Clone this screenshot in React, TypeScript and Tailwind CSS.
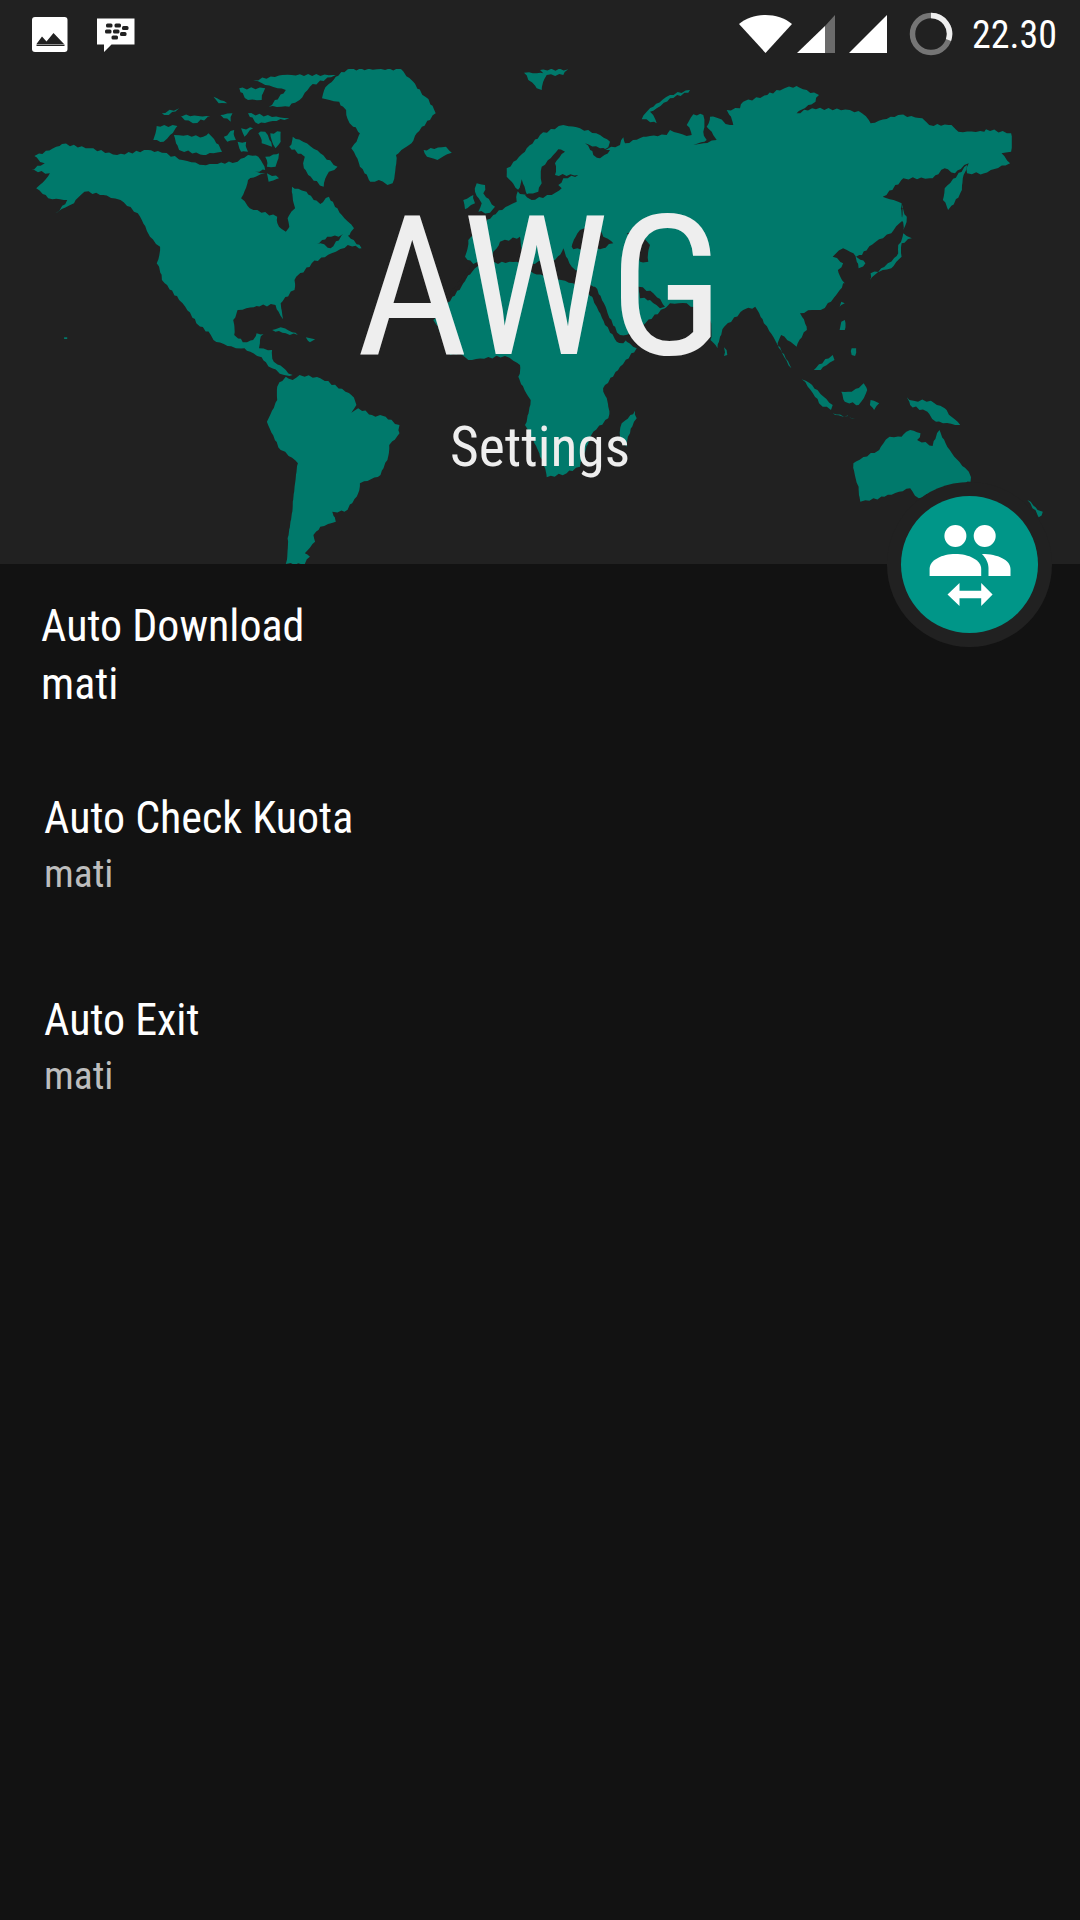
const font = { fontFamily: "Roboto, sans-serif", fontStretch: "75%" };

// each land mass is a list of [originX, originY, points] traced off the zoomed crops
type Chunk = [number, number, string];

// the crops at x=440 came back at 3x, the wider ones at 1568/540
function toPoints(chunks: Chunk[], rough = false) {
  const out: [number, number][] = [];
  chunks.forEach(([ox, oy, s]) => {
    const sx = ox === 440 ? 3 : 1568 / 540;
    s.split(" ").forEach((p) => {
      const [x, y] = p.split(",").map(Number);
      out.push([ox + x / sx, oy + y / 3]);
    });
  });
  if (!rough) return out.map((p) => p.join(",")).join(" ");
  // break long edges up so the coast looks nibbled like the bitmap map
  const res: string[] = [];
  out.forEach(([x, y], i) => {
    const [nx, ny] = out[(i + 1) % out.length];
    const n = Math.max(1, Math.round(Math.hypot(nx - x, ny - y) / 4));
    for (let k = 0; k < n; k++) {
      const t = k / n;
      const j = k === 0 ? 0 : Math.sin(x * 12.9 + y * 78.2 + k * 37.7) * 1.1;
      const l = Math.cos(x * 39.3 + y * 11.1 + k * 53.1) * 1.1;
      res.push(`${(x + (nx - x) * t + j).toFixed(1)},${(y + (ny - y) * t + (k === 0 ? 0 : l)).toFixed(1)}`);
    }
  });
  return res.join(" ");
}

const LAND: Chunk[][] = [
  // north america
  [[0, 0, "100,468 180,432 260,445 340,465 430,450 470,458 530,480 590,495 690,485 720,465 750,470 770,510 740,515 770,520 720,540 700,595 725,625 805,650 810,680 830,695 840,680 835,655 857,625 848,560 890,575 930,612 955,590 1000,655 1028,685 1015,705 950,710 905,740 930,730 960,745 1000,700 1050,745 1010,735 975,755 905,790 860,830 855,840"],
   [0, 280, "855,30 815,70 822,118 800,75 745,78 690,90 677,120 680,165 705,187 735,180 745,160 765,162 755,180 752,205 790,210 795,245 830,270 850,285 825,285 790,265 760,232 710,205 685,205 620,180 612,165 570,130 520,60 470,0"],
   [0, 0, "455,790 465,740 430,700 400,640 350,600 300,585 245,575 215,610 160,640 195,600 140,595 105,565 145,520 92,510 130,490"]],
  // greenland, iceland
  [[0, 0, "975,230 1010,208 1165,208 1200,245 1235,290 1265,340 1210,400 1195,430 1150,465 1140,550 1125,555 1100,540 1075,545 1045,500 1020,445 1045,400 1015,370 1005,330 985,305 935,295 945,262"]],
  [[0, 0, "1230,450 1295,440 1312,458 1270,480 1240,470"]],
  // arctic islands
  [[0, 0, "445,420 455,378 515,378 475,425"]],
  [[0, 0, "505,405 590,410 605,400 645,455 590,465 520,450"]],
  [[0, 0, "515,345 610,350 560,370"]],
  [[0, 0, "470,340 520,325 490,345"]],
  [[0, 0, "695,265 770,265 760,300 720,300"]],
  [[0, 0, "735,240 820,225 975,225 900,260 870,300 840,320 780,320 830,270 770,255"]],
  [[0, 0, "720,340 840,355 750,372"]],
  [[0, 0, "650,410 680,390 685,420 660,425"]],
  [[0, 0, "700,385 735,385 710,410"]],
  [[0, 0, "750,400 770,395 790,440 760,430"]],
  [[0, 0, "785,400 815,395 815,425 800,445"]],
  [[0, 0, "690,425 715,425 720,455 700,455"]],
  [[0, 0, "770,470 810,460 800,500 775,500"]],
  [[0, 0, "775,520 810,535 780,545"]],
  [[0, 0, "620,290 660,310 635,310"]],
  [[0, 0, "640,345 675,340 670,365"]],
  [[0, 0, "850,410 880,425 930,460 980,500 955,515 940,560 895,525 880,490 885,470 840,440"]],
  // south america
  [[0, 280, "805,320 830,290 850,300 870,285 930,295 1020,345 1035,375 1020,398 1040,385 1080,405 1120,410 1160,435 1160,460 1130,495 1125,540 1105,585 1045,610 1040,640 1000,695 965,695 975,725 930,740 910,765 915,785 885,820 900,830 885,852 830,852 835,775 850,680 865,550 815,510 775,425 805,360"]],
  [[0, 280, "790,150 815,142 865,165 830,160"]],
  [[0, 280, "888,172 915,178 900,187"]],
  [[0, 280, "186,172 195,172 195,177 186,177"]],
  // eurasia and africa
  [[440, 60, "200,325 260,265 300,225 370,195 420,205 480,225 510,245 505,262 490,270 540,255 550,232 555,250 610,230 680,225 690,210 740,228 755,225 740,195 760,163 790,165 790,215 800,240 760,255 790,250 830,240 815,215 800,200 810,170 835,175 870,195 880,195 860,150 900,145"],
   [540, 0, "590,305 660,285 710,265 745,258 810,285 800,305 745,340 790,325 900,330 935,340 960,370 1040,345 1110,355 1130,375 1195,375 1215,395 1290,395 1295,388 1368,400 1368,455 1340,460 1365,490 1290,520 1240,520 1245,490 1205,520 1175,505 1140,535 1055,535 995,590 1040,605 1050,610 1055,660 1020,700 975,725 935,765 918,770 945,790 925,805 910,760 880,745 850,770 880,790 865,810 885,850"],
   [540, 280, "880,10 860,45 815,90 790,90 755,100 775,150 745,200 700,165 690,190 730,265 690,195 650,130 625,80 590,90 535,140 515,205 495,180"],
   [440, 270, "810,150 740,100 690,100 675,115 610,165 545,205 560,215 590,235 540,290 495,345 490,365 505,410 505,445 460,485 420,590 380,610 320,622 300,560 255,465 272,390 235,320 240,285 195,258 85,270 60,250 30,255 -20,150 20,100 70,40 100,0"],
   [440, 60, "100,625 100,612 75,590 85,540 160,465 230,425 235,390 215,365 200,350"]],
  [[440, 270, "585,422 590,445 570,490 560,530 540,500 545,460"]],
  [[440, 270, "852,232 862,255 852,258"]],
  [[440, 60, "110,370 135,375 130,400 165,440 150,458 115,455 125,430 105,395"]],
  [[440, 60, "70,420 100,405 105,430 75,448"]],
  [[440, 60, "252,38 310,40 300,30 385,28 370,45 320,45 305,90 290,85 265,60"]],
  [[440, 60, "640,140 690,105 750,90 745,98 690,115 650,145 630,155 650,190 605,178 620,155"]],
  [[540, 0, "1240,495 1175,565 1170,600 1185,630 1225,570 1230,525"]],
  [[540, 0, "1050,610 1065,650 1055,690 1050,660"]],
  [[540, 0, "1055,700 1080,715 1050,730 1050,770 1020,805 960,820 958,840 1010,790 1040,760 1040,735"]],
  // asia pacific
  [[540, 280, "875,65 885,70 870,80"]],
  [[540, 280, "875,125 885,120 885,150 870,150"]],
  [[540, 280, "905,205 918,205 915,228 905,225"]],
  [[540, 280, "760,298 790,315 850,375 845,390 810,370"]],
  [[540, 280, "850,400 915,415 880,410"]],
  [[540, 280, "875,335 905,335 940,310 950,330 925,375 885,365"]],
  [[540, 280, "960,360 985,370 970,390 958,375"]],
  [[540, 280, "1065,352 1085,362 1135,362 1175,385 1195,410 1220,435 1150,425 1125,395 1075,375"]],
  [[540, 280, "795,270 850,225 855,240 815,270"]],
  [[540, 280, "910,550 985,510 1015,470 1050,470 1075,450 1105,460 1095,480 1140,498 1160,450 1190,510 1245,575 1250,605 1180,620 1100,655 1075,625 1000,650 930,665 925,620"]],
  [[540, 280, "1415,660 1445,690 1460,695 1448,712 1430,685"]],
];

const WATER: Chunk[][] = [
  [[440, 60, "355,268 375,275 345,310 345,345 415,345 370,355 355,375 365,385 335,405 275,420 255,405 295,395 305,370 305,320"]],
  [[440, 60, "245,358 262,405 240,402 232,392"]],
  [[440, 60, "435,250 480,265 510,270 480,295 460,285"]],
  [[440, 60, "395,560 420,510 470,500 490,530 520,550 490,565 400,568"]],
  [[440, 60, "100,612 30,700 35,705 105,625 150,610 230,605 280,640 330,650 400,670 470,720 460,680 440,660 395,620 370,565 345,600 270,610 245,570 240,530 180,545 160,575 150,600"]],
  [[440, 60, "560,520 590,520 630,555 625,605 600,605 600,560"]],
  [[440, 270, "450,50 465,50 500,120 540,195 570,200 550,220 530,215 495,165 470,110"]],
  [[440, 270, "595,50 640,70 675,110 660,115 630,90 600,85"]],
];

function WorldMap() {
  return (
    <svg className="absolute top-0 left-0" width="1080" height="564" viewBox="0 0 1080 564">
      {LAND.map((c, i) => (
        <polygon key={i} points={toPoints(c, true)} fill="#00796b" />
      ))}
      {WATER.map((c, i) => (
        <polygon key={i} points={toPoints(c, true)} fill="#212121" />
      ))}
      <rect x="0" y="0" width="1080" height="69" fill="#212121" />
    </svg>
  );
}

function StatusBar() {
  return (
    <div className="relative flex h-[69px] items-start justify-between pt-[15px] pr-[23px] pl-[32px]">
      <div className="flex gap-[29px]">
        <svg width="36" height="37" viewBox="0 0 36 37">
          <rect y="2" width="35.5" height="35" rx="3" fill="#fff" />
          <path d="M4.5 29 L10 21.5 L14.5 26.5 L21.5 18 L32 29 Z" fill="#212121" />
          <rect x="4.5" y="29.5" width="28" height="1.5" fill="#212121" />
        </svg>
        <svg width="38" height="38" viewBox="0 0 38 38">
          <path d="M0 3.5 H37.5 V29.5 H14.5 L7 37 V29.5 H0 Z" fill="#fff" />
          <g fill="#212121">
            <rect x="9" y="8.5" width="6.5" height="4" rx="1.5" />
            <rect x="17.5" y="8.5" width="6.5" height="4" rx="1.5" />
            <rect x="25" y="11" width="6.5" height="4" rx="1.5" />
            <rect x="8" y="14.5" width="6.5" height="4" rx="1.5" />
            <rect x="16" y="14.5" width="6.5" height="4" rx="1.5" />
            <rect x="23" y="17" width="6.5" height="4" rx="1.5" />
            <rect x="14.5" y="20.5" width="6.5" height="4" rx="1.5" />
          </g>
        </svg>
      </div>
      <div className="flex items-start">
        <svg width="148" height="39" viewBox="0 0 148 39">
          <path d="M0 9 C14 -3 39 -3 53 9 L26.5 38 Z" fill="#fff" />
          <path d="M58 38 L86 11 V38 Z" fill="#fff" />
          <path d="M86 11 L96 0 V38 H86 Z" fill="#6b6b6b" />
          <path d="M110 38 L148 0 V38 Z" fill="#fff" />
        </svg>
        <svg className="mt-[-3px] ml-[22px]" width="44" height="44" viewBox="0 0 44 44">
          <circle cx="22" cy="22" r="18.5" fill="none" stroke="#757575" strokeWidth="5.5" />
          <path d="M22 3.5 A18.5 18.5 0 0 1 39.5 28" fill="none" stroke="#eeeeee" strokeWidth="5.5" />
        </svg>
        <span className="mt-[-3px] ml-[19px] text-[38px] leading-[46px] text-white" style={font}>22.30</span>
      </div>
    </div>
  );
}

function Fab() {
  return (
    <div className="absolute top-[482px] left-[887px] flex h-[165px] w-[165px] items-center justify-center rounded-full bg-[#212121]">
      <div className="h-[137px] w-[137px] rounded-full bg-[#009688]">
        <svg width="137" height="137" viewBox="0 0 137 137" fill="#fff">
          <circle cx="54.4" cy="40" r="11" />
          <circle cx="83.7" cy="40" r="11" />
          <path d="M28.6 80 V73 C28.6 64 41 58 54.4 58 S80.2 64 80.2 73 V80 Z" />
          <path d="M80.9 58 C97 58 109.5 64 109.5 73 V80 H87.5 V72 C87.5 67 85 62 80.9 58 Z" />
          <path d="M46.5 98.5 L58.5 87 V94.7 H80.2 V87 L91.6 98.5 L80.2 110 V102.3 H58.5 V110 Z" />
        </svg>
      </div>
    </div>
  );
}

function Row({ title, value, className, valueClass }: { title: string; value: string; className: string; valueClass: string }) {
  return (
    <div className={className} style={font}>
      <div className="text-[44px] leading-[58px] text-white">{title}</div>
      <div className={valueClass}>{value}</div>
    </div>
  );
}

export default function App() {
  return (
    <div className="relative h-[1920px] w-[1080px] overflow-hidden bg-[#121212]">
      <div className="relative h-[564px] bg-[#212121]">
        <WorldMap />
        <StatusBar />
        <div className="relative text-center text-[#eeeeee]" style={font}>
          <div className="mt-[99px] text-[194px] leading-[240px]">AWG</div>
          <div className="mt-[7px] text-[55.5px] leading-[66px]">Settings</div>
        </div>
      </div>
      <Row title="Auto Download" value="mati" className="mt-[33px] pl-[41px]" valueClass="text-[44px] leading-[58px] text-white" />
      <Row title="Auto Check Kuota" value="mati" className="mt-[76px] pl-[44px]" valueClass="text-[39.5px] leading-[54px] text-[#bdbdbd]" />
      <Row title="Auto Exit" value="mati" className="mt-[90px] pl-[44px]" valueClass="text-[39.5px] leading-[54px] text-[#bdbdbd]" />
      <Fab />
    </div>
  );
}
